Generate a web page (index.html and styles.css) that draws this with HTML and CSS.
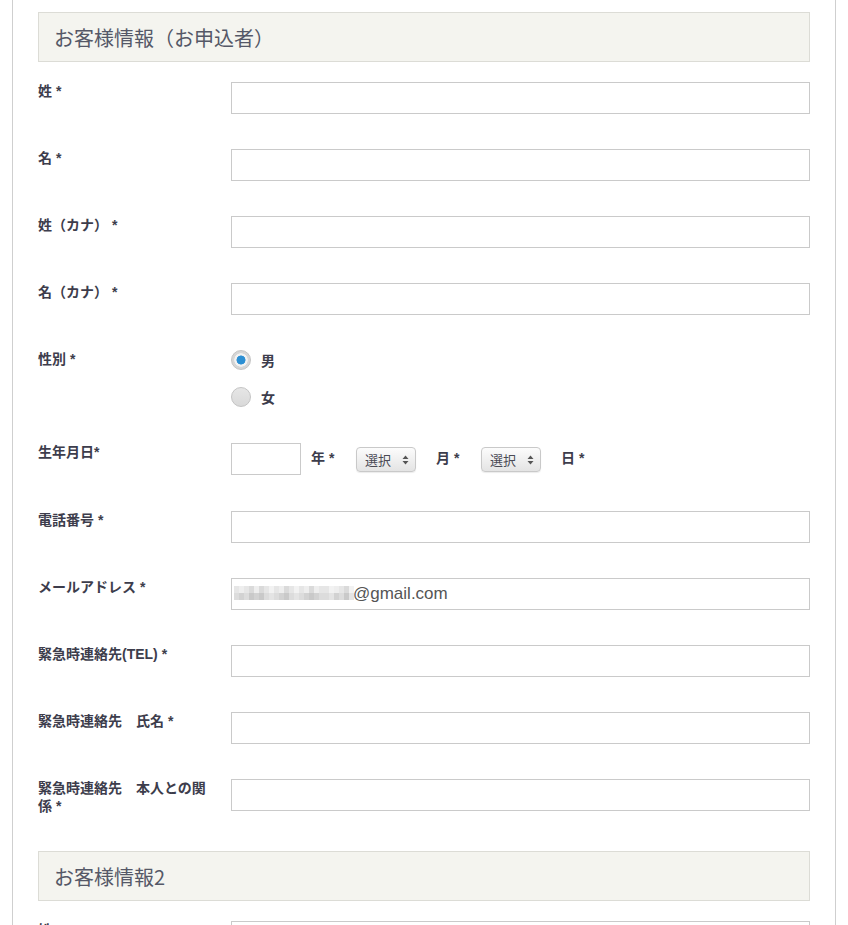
FILE: index.html
```html
<!DOCTYPE html>
<html lang="ja">
<head>
<meta charset="utf-8">
<title>お客様情報</title>
<link rel="stylesheet" href="styles.css">
</head>
<body>
<div class="wrap">
  <section class="section">
    <h2 class="sec-head">お客様情報（お申込者）</h2>
    <div class="row"><label class="lbl">姓 *</label><div class="ctl"><input class="txt" type="text"></div></div>
    <div class="row"><label class="lbl">名 *</label><div class="ctl"><input class="txt" type="text"></div></div>
    <div class="row"><label class="lbl">姓（カナ） *</label><div class="ctl"><input class="txt" type="text"></div></div>
    <div class="row"><label class="lbl">名（カナ） *</label><div class="ctl"><input class="txt" type="text"></div></div>
    <div class="row"><label class="lbl">性別 *</label>
      <div class="ctl radios">
        <label class="ropt"><input class="radio" type="radio" name="sex" checked><span>男</span></label>
        <label class="ropt"><input class="radio" type="radio" name="sex"><span>女</span></label>
      </div>
    </div>
    <div class="row row-bday"><label class="lbl">生年月日*</label>
      <div class="ctl bday">
        <input class="txt year" type="text">
        <span class="unit">年 *</span>
        <span class="sel"><select><option>選択</option></select><svg class="arr" width="7" height="10" viewBox="0 0 7 10"><path d="M3.5 0.5 L6.5 4 L0.5 4 Z M3.5 9.5 L6.5 6 L0.5 6 Z" fill="#555"/></svg></span>
        <span class="unit">月 *</span>
        <span class="sel"><select><option>選択</option></select><svg class="arr" width="7" height="10" viewBox="0 0 7 10"><path d="M3.5 0.5 L6.5 4 L0.5 4 Z M3.5 9.5 L6.5 6 L0.5 6 Z" fill="#555"/></svg></span>
        <span class="unit">日 *</span>
      </div>
    </div>
    <div class="row"><label class="lbl">電話番号 *</label><div class="ctl"><input class="txt" type="text"></div></div>
    <div class="row"><label class="lbl">メールアドレス *</label>
      <div class="ctl email">
        <input class="txt mail" type="text" value="@gmail.com">
        <span class="mosaic"><i class="a"></i><i class="b"></i><i class="a"></i><i class="c"></i><i class="b"></i><i class="c"></i><i class="a"></i><i class="d"></i><i class="a"></i><i class="b"></i><i class="c"></i><i class="a"></i><i class="d"></i><i class="a"></i><i class="b"></i><i class="c"></i><i class="b"></i><i class="a"></i><i class="a"></i><i class="d"></i><i class="b"></i><i class="a"></i><i class="c"></i><i class="d"></i></span>
      </div>
    </div>
    <div class="row"><label class="lbl">緊急時連絡先(TEL) *</label><div class="ctl"><input class="txt" type="text"></div></div>
    <div class="row"><label class="lbl">緊急時連絡先　氏名 *</label><div class="ctl"><input class="txt" type="text"></div></div>
    <div class="row"><label class="lbl">緊急時連絡先　本人との関係 *</label><div class="ctl"><input class="txt" type="text"></div></div>
  </section>
  <section class="section">
    <h2 class="sec-head">お客様情報2</h2>
    <div class="row"><label class="lbl">姓 *</label><div class="ctl"><input class="txt" type="text"></div></div>
  </section>
</div>
</body>
</html>
```
FILE: styles.css
```css
html, body {
  margin: 0;
  padding: 0;
  background: #fff;
}
body {
  font-family: "Liberation Sans", "Noto Sans CJK JP", sans-serif;
  color: #3d3d4c;
}
.wrap {
  margin: 0 12px;
  border-left: 1px solid #cfcfcf;
  border-right: 1px solid #cfcfcf;
  padding: 12px 25px 0;
  min-height: 925px;
  box-sizing: border-box;
}
.section + .section {
  padding-top: 1px;
}
.sec-head {
  margin: 0 0 20px;
  height: 50px;
  box-sizing: border-box;
  border: 1px solid #dcdcd6;
  background: #f4f4ef;
  padding: 0 15px;
  display: flex;
  align-items: center;
  font-family: "Noto Sans CJK JP", sans-serif;
  font-weight: 400;
  font-size: 20px;
  color: #555867;
}
.row {
  display: grid;
  grid-template-columns: 193px 1fr;
  margin-bottom: 35px;
  align-items: start;
}
.row-bday {
  margin-bottom: 36px;
}
.lbl {
  font-family: "Liberation Sans", "Noto Sans CJK JP", sans-serif;
  font-weight: 700;
  font-size: 14px;
  line-height: 18px;
  padding-right: 18px;
  padding-top: 0;
  color: #3d3d4c;
}
.ctl {
  min-width: 0;
}
.txt {
  display: block;
  width: 100%;
  height: 32px;
  box-sizing: border-box;
  border: 1px solid #cacaca;
  background: #fff;
  margin: 0;
  padding: 0 6px;
  font-family: "Liberation Sans", "Noto Sans CJK JP", sans-serif;
  font-size: 17px;
  color: #555;
  border-radius: 0;
  outline: none;
}
.radios {
  display: flex;
  flex-direction: column;
  gap: 17px;
  padding-bottom: 1px;
}
.ropt {
  display: flex;
  align-items: center;
  gap: 10px;
  height: 20px;
  font-family: "Noto Sans CJK JP", sans-serif;
  font-weight: 700;
  font-size: 14px;
  color: #3d3d4c;
}
.radio {
  -webkit-appearance: none;
  appearance: none;
  width: 20px;
  height: 20px;
  margin: 0;
  border-radius: 50%;
  border: 1px solid #c4c4c4;
  background: linear-gradient(#e6e6e6, #d9d9d9);
  box-sizing: border-box;
}
.radio:checked {
  background: radial-gradient(circle, #2c8fd3 0 4.2px, #f2f2f2 4.8px 6.4px, #d6d6d6 7px);
}
.bday {
  display: flex;
  align-items: center;
}
.txt.year {
  width: 70px;
  flex: none;
}
.unit {
  font-family: "Liberation Sans", "Noto Sans CJK JP", sans-serif;
  font-weight: 700;
  font-size: 14px;
  color: #3d3d4c;
  width: 25px;
  white-space: nowrap;
  margin: 0 20px 0 20px;
  position: relative;
  top: -2px;
}
.bday .year + .unit {
  margin-left: 10px;
}
.sel {
  position: relative;
  display: inline-block;
  width: 60px;
  height: 25px;
}
.sel select {
  -webkit-appearance: none;
  appearance: none;
  width: 60px;
  height: 25px;
  margin: 0;
  border: 1px solid #c9c9c9;
  border-radius: 4px;
  background: linear-gradient(#fcfcfc, #e4e4e4);
  box-shadow: 0 1px 1px rgba(0,0,0,0.08);
  font-family: "Noto Sans CJK JP", sans-serif;
  font-size: 13px;
  color: #4a4a55;
  padding: 0 0 0 8px;
  outline: none;
}
.arr {
  position: absolute;
  right: 7px;
  top: 8px;
  pointer-events: none;
}
.email {
  position: relative;
}
.txt.mail {
  padding-left: 121px;
}
.mosaic {
  position: absolute;
  left: 3px;
  top: 8px;
  display: flex;
  height: 14px;
}
.mosaic i {
  display: block;
  width: 5px;
  height: 14px;
}
.mosaic i.a { background: linear-gradient(#e6e6e6 50%, #dcdcdc 50%); }
.mosaic i.b { background: linear-gradient(#eeeeee 50%, #d2d2d2 50%); }
.mosaic i.c { background: linear-gradient(#dadada 50%, #c9c9c9 50%); }
.mosaic i.d { background: linear-gradient(#f2f2f2 50%, #e4e4e4 50%); }
```
